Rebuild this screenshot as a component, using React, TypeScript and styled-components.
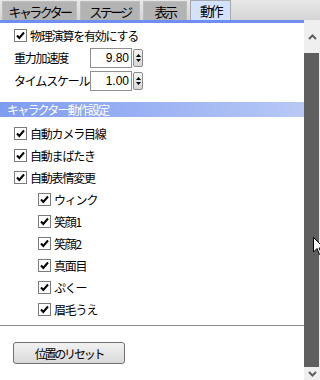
import React from 'react';
import styled, { createGlobalStyle } from 'styled-components';

const GlobalStyle = createGlobalStyle`
  html, body {
    margin: 0;
    padding: 0;
    background: #ffffff;
  }
  body {
    font-family: 'Noto Sans CJK JP', 'Liberation Sans', sans-serif;
    font-size: 12px;
    letter-spacing: -1.2px;
    color: #000;
  }
`;

const Frame = styled.div`
  position: relative;
  width: 320px;
  height: 380px;
  overflow: hidden;
  display: flex;
  flex-direction: column;
  background: #fff;
`;

const TabBar = styled.div`
  height: 20px;
  display: flex;
  align-items: flex-end;
  gap: 3px;
  padding-left: 2px;
  background: linear-gradient(#e8e8e8, #d4d4d4);
`;

const Tab = styled.div<{ active?: boolean; w: number }>`
  width: ${({ w }) => w}px;
  height: ${({ active }) => (active ? '20px' : '19px')};
  box-sizing: border-box;
  display: flex;
  align-items: center;
  justify-content: center;
  white-space: nowrap;
  font-size: 13px;
  letter-spacing: -2.6px;
  line-height: 1;
  background: ${({ active }) => (active ? '#d3e2ff' : '#b3b3b3')};
  border: 1px solid ${({ active }) => (active ? '#a8a8a8' : '#bdbdbd')};
  border-bottom: none;
`;

const Main = styled.div`
  flex: 1;
  display: flex;
  min-height: 0;
`;

const Pane = styled.div`
  width: 304px;
  border-top: 3px solid #6f8ef2;
  display: flex;
  flex-direction: column;
  padding-top: 1px;
`;

const Row = styled.div<{ indent?: number }>`
  height: 22px;
  display: flex;
  align-items: center;
  padding-left: ${({ indent = 14 }) => indent}px;
  gap: 3px;
  white-space: nowrap;
`;

const FieldRow = styled.div`
  height: 23px;
  display: flex;
  align-items: center;
  padding-left: 14px;
`;

const FieldLabel = styled.span`
  width: 76px;
  white-space: nowrap;
`;

const NumberBox = styled.div`
  width: 42px;
  height: 20px;
  box-sizing: border-box;
  border: 1px solid #8f8f8f;
  display: flex;
  align-items: center;
  justify-content: flex-end;
  padding-right: 2px;
  font-family: 'Liberation Sans', sans-serif;
  font-size: 12px;
  letter-spacing: 0;
`;

const Spinner = styled.div`
  width: 10px;
  height: 18px;
  margin-left: 1px;
  box-sizing: border-box;
  border: 1px solid #8a8a8a;
  border-radius: 2px;
  background: linear-gradient(#f4f4f4, #d6d6d6);
  display: flex;
  flex-direction: column;
  align-items: center;
  justify-content: center;
  gap: 2px;
`;

const SectionHeader = styled.div`
  margin-top: 10px;
  height: 15px;
  display: flex;
  align-items: center;
  padding-left: 7px;
  color: #fff;
  letter-spacing: -1.8px;
  background: linear-gradient(to right, #7f9cf0, #b8c9f6);
`;

const SectionBody = styled.div`
  padding-top: 5px;
  display: flex;
  flex-direction: column;
`;

const Divider = styled.hr`
  margin: 5px 0 0;
  border: none;
  border-top: 1px solid #8a8a8a;
  height: 0;
`;

const ResetButton = styled.button`
  margin: 16px 0 0 13px;
  width: 112px;
  height: 22px;
  box-sizing: border-box;
  border: 1px solid #707070;
  border-radius: 3px;
  background: linear-gradient(#f2f2f2, #d9d9d9);
  font-family: 'Noto Sans CJK JP', sans-serif;
  font-size: 12px;
  letter-spacing: -2.2px;
  color: #000;
  padding: 0;
`;

const ScrollBar = styled.div`
  width: 16px;
  background: #efefef;
  display: flex;
  flex-direction: column;
  align-items: center;
`;

const ArrowBox = styled.div<{ h: number }>`
  height: ${({ h }) => h}px;
  width: 16px;
  display: flex;
  align-items: center;
  justify-content: center;
`;

const Thumb = styled.div`
  flex: 1;
  width: 15px;
  margin-left: -1px;
  background: #5f5f5f;
`;

const Cursor = styled.svg`
  position: absolute;
  left: 313px;
  top: 237px;
`;

function CheckBox() {
  return (
    <svg width="13" height="13" viewBox="0 0 13 13">
      <rect x="0.5" y="0.5" width="12" height="12" fill="#fff" stroke="#7a7a7a" />
      <path d="M3 6.5 L5.3 9 L10 3.5" fill="none" stroke="#000" strokeWidth="2" />
    </svg>
  );
}

function Check({ label, indent }: { label: string; indent?: number }) {
  return (
    <Row indent={indent}>
      <CheckBox />
      <span>{label}</span>
    </Row>
  );
}

function NumberField({ label, value }: { label: string; value: string }) {
  return (
    <FieldRow>
      <FieldLabel>{label}</FieldLabel>
      <NumberBox>{value}</NumberBox>
      <Spinner>
        <svg width="5" height="3" viewBox="0 0 5 3">
          <path d="M0 3 L2.5 0 L5 3 Z" fill="#000" />
        </svg>
        <svg width="5" height="3" viewBox="0 0 5 3">
          <path d="M0 0 L2.5 3 L5 0 Z" fill="#000" />
        </svg>
      </Spinner>
    </FieldRow>
  );
}

const faces = ['ウィンク', '笑顔1', '笑顔2', '真面目', 'ぷくー', '眉毛うえ'];

export default function App() {
  return (
    <Frame>
      <GlobalStyle />
      <TabBar>
        <Tab w={75}>キャラクター</Tab>
        <Tab w={60}>ステージ</Tab>
        <Tab w={44}>表示</Tab>
        <Tab w={41} active>動作</Tab>
      </TabBar>
      <Main>
        <Pane>
          <Check label="物理演算を有効にする" />
          <NumberField label="重力加速度" value="9.80" />
          <NumberField label="タイムスケール" value="1.00" />
          <SectionHeader>キャラクター動作設定</SectionHeader>
          <SectionBody>
            <Check label="自動カメラ目線" />
            <Check label="自動まばたき" />
            <Check label="自動表情変更" />
            {faces.map((f) => (
              <Check key={f} label={f} indent={38} />
            ))}
          </SectionBody>
          <Divider />
          <div>
            <ResetButton>位置のリセット</ResetButton>
          </div>
        </Pane>
        <ScrollBar>
          <ArrowBox h={33}>
            <svg width="9" height="6" viewBox="0 0 9 6">
              <path d="M1 5 L4.5 1.5 L8 5" fill="none" stroke="#5f5f5f" strokeWidth="2" />
            </svg>
          </ArrowBox>
          <Thumb />
          <ArrowBox h={13}>
            <svg width="9" height="6" viewBox="0 0 9 6">
              <path d="M1 1 L4.5 4.5 L8 1" fill="none" stroke="#5f5f5f" strokeWidth="2" />
            </svg>
          </ArrowBox>
        </ScrollBar>
      </Main>
      <Cursor width="12" height="19" viewBox="0 0 12 19">
        <path d="M0.5 0.5 L0.5 15 L4 11.5 L6.5 17.5 L8.5 16.5 L6 11 L11 11 Z" fill="#fff" stroke="#000" />
      </Cursor>
    </Frame>
  );
}
